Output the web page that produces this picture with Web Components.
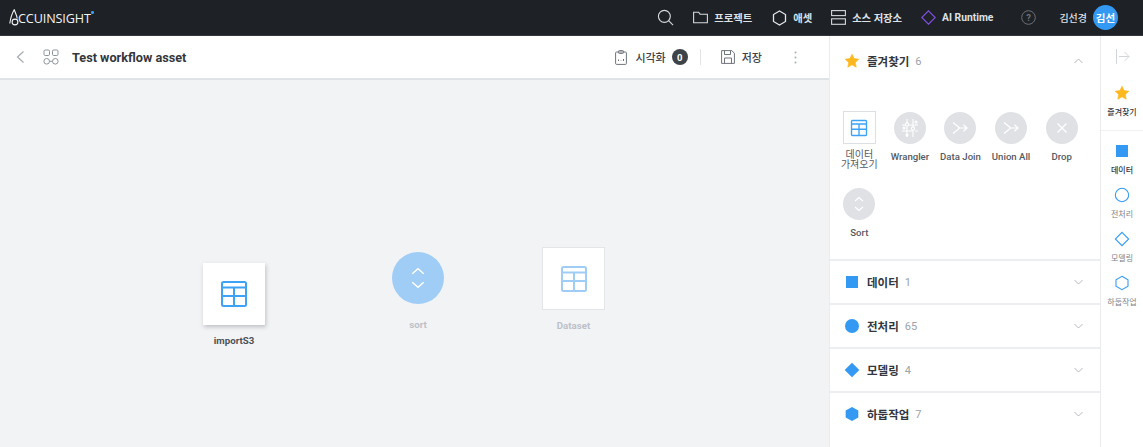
<!DOCTYPE html>
<html lang="ko"><head><meta charset="utf-8"><title>Workflow</title>
<style>
html,body{margin:0;height:100%;overflow:hidden}
body{font-family:Roboto,"Noto Sans CJK KR",sans-serif;color:#33373d}
</style></head><body>
<app-shell></app-shell>
<script>
const ICONS={
 table:(c,w=2)=>`<svg viewBox="0 0 32 32" width="100%" height="100%" fill="none" stroke="${c}" stroke-width="${w}"><rect x="4" y="4" width="24" height="24" rx="1.500"/><path d="M4 9.500H28M4 18H28M16 9.500V28"/></svg>`,
 star:`<svg viewBox="0 0 24 24" width="100%" height="100%"><path fill="#fdb81e" stroke="#fdb81e" stroke-width="1" stroke-linejoin="round" d="M12 1.800l3 6.600 7.200.9-5.300 4.900 1.400 7.100-6.300-3.600-6.300 3.600 1.400-7.100-5.300-4.900 7.200-.9z"/></svg>`,
 square:`<svg viewBox="0 0 24 24" width="100%" height="100%"><rect x="3" y="3" width="18" height="18" fill="#3399f3"/></svg>`,
 circle:`<svg viewBox="0 0 24 24" width="100%" height="100%"><circle cx="12" cy="12" r="10.500" fill="#3399f3"/></svg>`,
 diamond:`<svg viewBox="0 0 24 24" width="100%" height="100%"><path d="M12 1L23 12 12 23 1 12z" fill="#3399f3"/></svg>`,
 hex:`<svg viewBox="0 0 24 24" width="100%" height="100%"><path d="M12 1.500l9.500 5.300v10.400L12 22.500l-9.500-5.300V6.800z" fill="#3399f3"/></svg>`,
 circleO:`<svg viewBox="0 0 24 24" width="100%" height="100%"><circle cx="12" cy="12" r="10" fill="none" stroke="#3399f3" stroke-width="1.600"/></svg>`,
 diamondO:`<svg viewBox="0 0 24 24" width="100%" height="100%"><path d="M12 2L22 12 12 22 2 12z" fill="none" stroke="#3399f3" stroke-width="1.600"/></svg>`,
 hexO:`<svg viewBox="0 0 24 24" width="100%" height="100%"><path d="M12 2l9 5.100v9.800L12 22l-9-5.100V7.100z" fill="none" stroke="#3399f3" stroke-width="1.600"/></svg>`,
 sort:(c,w=1.200)=>`<svg viewBox="0 0 32 32" width="100%" height="100%" fill="none" stroke="${c}" stroke-width="${w}"><path d="M12 13L16 9.500l4 3.500M12 19l4 3.500 4-3.500"/></svg>`,
 join:`<svg viewBox="0 0 32 32" width="100%" height="100%" fill="none" stroke="#fff" stroke-width="1.200"><path d="M9 10.500l6.700 5.500L9 21.500M15.700 16H23M19.500 12.800L23 16l-3.500 3.200"/></svg>`,
 x:`<svg viewBox="0 0 32 32" width="100%" height="100%" fill="none" stroke="#fff" stroke-width="1.200"><path d="M11.500 11.500l9 9M20.500 11.500l-9 9"/></svg>`,
 wrangler:`<svg viewBox="0 0 32 32" width="100%" height="100%" fill="none" stroke="#fff" stroke-width="1.100"><path d="M13 7V11M13 14V25M19 7V15M19 18V25M8 13H12M15 13H24M8 19H18M21 19H24"/><circle cx="13" cy="12.500" r="1.600"/><circle cx="19" cy="16.500" r="1.600"/><circle cx="10" cy="16" r="1"/><circle cx="13" cy="23" r="1"/><circle cx="22" cy="10" r="1"/></svg>`
};

class AppShell extends HTMLElement{constructor(){super();this.attachShadow({mode:'open'}).innerHTML=`<style>
:host{display:grid;grid-template-rows:35px 412px;grid-template-columns:829px 1fr 43px;width:1143px;height:447px}
top-bar{grid-column:1/4}
.left{display:flex;flex-direction:column;min-width:0}
</style>
<top-bar></top-bar>
<div class="left"><work-toolbar></work-toolbar><flow-canvas></flow-canvas></div>
<side-panel></side-panel><side-rail></side-rail>`}}

class TopBar extends HTMLElement{constructor(){super();this.attachShadow({mode:'open'}).innerHTML=`<style>
:host{display:flex;align-items:center;background:#1e2126;color:#e9ebee;height:35px;border-bottom:1px solid #33373d;margin-bottom:-1px;position:relative;z-index:1}
.logo{display:flex;align-items:center;margin-left:9px;font:400 12.600px "Open Sans",sans-serif;letter-spacing:-.1px;color:#f2f3f4;padding-top:1px;position:relative}
.logo svg{width:13px;height:18px;margin-right:-4px}
.logo i{width:2.500px;height:2.500px;border-radius:50%;background:#3aa0f0;position:absolute;right:-3px;top:3px}
nav{margin-left:auto;display:flex;align-items:center;height:100%}
.it{display:flex;align-items:center;font-size:10.300px;font-weight:700;white-space:nowrap;color:#dfe2e6}
.it svg{display:block}
.av{width:25px;height:25px;border-radius:50%;background:#3399f3;color:#fff;font-size:10.500px;font-weight:700;display:flex;align-items:center;justify-content:center;margin:0 25px 0 6px}
</style>
<div class="logo"><svg viewBox="0 0 13 18" fill="none" stroke="#f2f3f4" stroke-width="1.100"><path d="M.8 14.500C1.500 9.500 3 4.500 5.200.8 6.500 4 8 7 8.200 9.500"/><circle cx="6" cy="13" r="2.900"/></svg><span>CCUINSIGHT</span><i></i></div>
<nav>
<div class="it" style="margin-right:19px"><svg width="17" height="17" viewBox="0 0 18 18" fill="none" stroke="#d5d8dc" stroke-width="1.200"><circle cx="7.800" cy="7.800" r="6.300"/><path d="M12.300 12.300L17 17"/></svg></div>
<div class="it" style="margin-right:20px"><svg width="15" height="13" viewBox="0 0 15 13" fill="none" stroke="#d5d8dc" stroke-width="1.100" style="margin-right:6px"><path d="M.6 11.800V1.200h5l1.500 2h7.300v8.600z"/></svg>프로젝트</div>
<div class="it" style="margin-right:19px"><svg width="15" height="16" viewBox="0 0 15 16" fill="none" stroke="#e4e6e9" stroke-width="1.300" style="margin-right:6px"><path d="M7.500 1l6 3.500v7l-6 3.500-6-3.500v-7z"/></svg>애셋</div>
<div class="it" style="margin-right:19px"><svg width="15" height="15" viewBox="0 0 15 15" fill="none" stroke="#d5d8dc" stroke-width="1.100" style="margin-right:6px"><rect x=".6" y=".6" width="13.800" height="5"/><rect x=".6" y="8.800" width="13.800" height="5.500"/></svg>소스 저장소</div>
<div class="it" style="margin-right:28px"><svg width="15" height="15" viewBox="0 0 15 15" fill="none" stroke="#7e4fe0" stroke-width="1.200" style="margin-right:6px"><path d="M7.500 .8l6.700 6.700-6.700 6.700L.8 7.500z"/></svg>AI Runtime</div>
<div class="it" style="margin-right:23px"><svg width="15" height="15" viewBox="0 0 15 15" fill="none" stroke="#6d7177" stroke-width="1"><circle cx="7.500" cy="7.500" r="6.800"/><text x="7.500" y="11" text-anchor="middle" font-size="9.500" font-family="Roboto" fill="#6d7177" stroke="none">?</text></svg></div>
<div class="it" style="font-weight:500;font-size:10px">김선경</div>
<div class="av">김선</div>
</nav>`}}

class WorkToolbar extends HTMLElement{constructor(){super();this.attachShadow({mode:'open'}).innerHTML=`<style>
:host{display:flex;align-items:center;height:44px;box-sizing:border-box;background:#fff;border-bottom:2px solid #dfe2e7;flex:none;margin-top:1px}
h1{font-size:12.700px;font-weight:700;color:#33373d;margin:0 0 0 13px}
.r{margin-left:auto;display:flex;align-items:center;font-size:11px;font-weight:500;color:#3e4249}
.b{width:16px;height:16px;border-radius:50%;background:#3e4249;color:#fff;font-size:9.500px;font-weight:700;display:flex;align-items:center;justify-content:center;margin-left:6px}
.sep{width:1px;height:16px;background:#e2e4e8;margin:0 20px 0 12px}
</style>
<svg width="10" height="14" viewBox="0 0 10 14" fill="none" stroke="#a5abb3" stroke-width="1.200" style="margin-left:15px"><path d="M8.500 1.500L2.500 7l6 5.500"/></svg>
<svg width="16" height="16" viewBox="0 0 16 16" fill="none" stroke="#8d939b" stroke-width="1" style="margin-left:18px"><rect x="1" y="1" width="5.500" height="5.500" rx="1.200"/><rect x="9.500" y="1" width="5.500" height="5.500" rx="1.200"/><circle cx="3.700" cy="12.300" r="2.800"/><circle cx="12.300" cy="12.300" r="2.800"/><path d="M6.500 12.300H9.500"/></svg>
<h1>Test workflow asset</h1>
<div class="r">
<svg width="12" height="15" viewBox="0 0 12 15" fill="none" stroke="#6f747b" stroke-width="1" style="margin-right:8px"><rect x=".6" y="2" width="10.800" height="12.400" rx="1"/><rect x="3.500" y=".6" width="5" height="2.800" rx=".8"/><path d="M3.500 11V9.500M6 11V10.500M8.500 11V9"/></svg>시각화
<span class="b">0</span><span class="sep"></span>
<svg width="14" height="14" viewBox="0 0 14 14" fill="none" stroke="#6f747b" stroke-width="1" style="margin-right:7px"><path d="M.6.6H10.800L13.400 3.200V13.400H.6z"/><path d="M3.500.6V4.500H9.500V.6M3.500 13.400V8H10.500V13.400"/></svg>저장
<svg width="3" height="13" viewBox="0 0 3 13" fill="#a8adb4" style="margin:0 32px 0 32px"><circle cx="1.500" cy="1.500" r="1"/><circle cx="1.500" cy="6.500" r="1"/><circle cx="1.500" cy="11.500" r="1"/></svg>
</div>`}}

class FlowCanvas extends HTMLElement{constructor(){super();this.attachShadow({mode:'open'}).innerHTML=`<style>
:host{display:block;position:relative;flex:1;background:#f2f3f5}
flow-node{position:absolute}
</style>
<flow-node kind="box" label="importS3" style="left:203px;top:183px"></flow-node>
<flow-node kind="circle" label="sort" faded style="left:392px;top:172px"></flow-node>
<flow-node kind="box" label="Dataset" faded style="left:542px;top:167px"></flow-node>`}}

class FlowNode extends HTMLElement{connectedCallback(){
 const k=this.getAttribute('kind'),f=this.hasAttribute('faded'),l=this.getAttribute('label');
 const box=k==='box';
 this.attachShadow({mode:'open'}).innerHTML=`<style>
:host{display:flex;flex-direction:column;align-items:center;width:${box?(f?63:62):52}px}
.n{box-sizing:border-box;display:flex;align-items:center;justify-content:center;flex:none}
.box{width:${f?63:62}px;height:${f?63:62}px;background:#fff;${f?'border:1px solid #e3e5e9':'box-shadow:1px 2px 4px rgba(60,65,75,.28)'}}
.box span{width:32px;height:32px;display:block}
.c{width:52px;height:52px;border-radius:50%;background:#a0cdf5}
.c span{width:46px;height:46px;display:block}
label{font-size:9.700px;font-weight:700;white-space:nowrap;line-height:12px;margin-top:${box?10:15}px;color:${f?'#bcc1c8':'#4c5057'}}
</style>
<div class="n ${box?'box':'c'}"><span>${box?ICONS.table(f?'#a0cdf5':'#3ea2f5',2):ICONS.sort('#fff',1)}</span></div>
<label>${l}</label>`;
}}

class SidePanel extends HTMLElement{constructor(){super();this.attachShadow({mode:'open'}).innerHTML=`<style>
:host{display:block;background:#fff;border-left:1px solid #e9ebee;margin-top:1px;overflow:hidden}
.grid{display:grid;grid-template-columns:repeat(5,50.600px);grid-auto-rows:76px;padding:26px 0 0 4px;height:139px;margin-bottom:8px;box-sizing:content-box}
</style>
<panel-section icon="star" name="즐겨찾기" count="6" open>
<div class="grid">
<fav-item kind="table" label="데이터<br>가져오기"></fav-item>
<fav-item kind="wrangler" label="Wrangler"></fav-item>
<fav-item kind="join" label="Data Join"></fav-item>
<fav-item kind="join" label="Union All"></fav-item>
<fav-item kind="x" label="Drop"></fav-item>
<fav-item kind="sort" label="Sort"></fav-item>
</div></panel-section>
<panel-section icon="square" name="데이터" count="1"></panel-section>
<panel-section icon="circle" name="전처리" count="65"></panel-section>
<panel-section icon="diamond" name="모델링" count="4"></panel-section>
<panel-section icon="hex" name="하둡작업" count="7" last></panel-section>`}}

class PanelSection extends HTMLElement{connectedCallback(){
 const o=this.hasAttribute('open');
 this.attachShadow({mode:'open'}).innerHTML=`<style>
:host{display:block;border-bottom:${this.hasAttribute('last')?'0':'2px solid #eceef1'}}
.h{display:flex;align-items:center;height:${o?50:42}px;padding-left:14px;box-sizing:border-box}
.i{width:16px;height:16px;flex:none}
b{font-size:11.500px;font-weight:700;color:#33373d;margin-left:7px}
em{font-style:normal;font-size:11px;color:#9ca2aa;margin-left:6px}
svg.ch{margin-left:auto;margin-right:17px}
</style>
<div class="h"><span class="i">${ICONS[this.getAttribute('icon')]}</span><b>${this.getAttribute('name')}</b><em>${this.getAttribute('count')}</em>
<svg class="ch" width="9" height="6" viewBox="0 0 9 6" fill="none" stroke="#b4b9c0" stroke-width="1"><path d="${o?'M.5 5L4.500 1l4 4':'M.5 1l4 4 4-4'}"/></svg></div><slot></slot>`;
}}

class FavItem extends HTMLElement{connectedCallback(){
 const k=this.getAttribute('kind'),t=k==='table';
 const inner=t?ICONS.table('#3ea2f5',2.200):k==='sort'?ICONS.sort('#fff'):ICONS[k];
 this.attachShadow({mode:'open'}).innerHTML=`<style>
:host{display:flex;flex-direction:column;align-items:center}
.c{width:32px;height:32px;display:flex;align-items:center;justify-content:center;box-sizing:border-box;${t?'border:1px solid #dcdfe4;background:#fff;width:33px;height:33px;margin-top:-1px':'border-radius:50%;background:#dfe1e5'}}
.c span{display:block;width:${t?'20px':'32px'};height:${t?'20px':'32px'}}
p{margin:${t?6:8}px 0 0;font-size:${t?10:9.600}px;font-weight:${t?400:500};line-height:10px;text-align:center;color:#565a61;white-space:nowrap}
</style><div class="c"><span>${inner}</span></div><p>${this.getAttribute('label')}</p>`;
}}

class SideRail extends HTMLElement{constructor(){super();this.attachShadow({mode:'open'}).innerHTML=`<style>
:host{display:flex;flex-direction:column;align-items:center;background:#fff;border-left:1px solid #e9ebee;box-sizing:border-box;margin-top:1px}
.top{width:100%;height:94px;border-bottom:1px solid #eef0f2;display:flex;flex-direction:column;align-items:center;flex:none}
.arrow{margin-top:13px;margin-bottom:21px}
</style>
<div class="top"><svg class="arrow" width="15" height="15" viewBox="0 0 15 15" fill="none" stroke="#d2d6db" stroke-width="1"><path d="M1.500 0V15M4 7.500H14M9.500 3l4.500 4.500L9.500 12"/></svg>
<rail-item icon="star" label="즐겨찾기" active></rail-item></div>
<rail-item icon="square" label="데이터" active style="margin-top:12px"></rail-item>
<rail-item icon="circleO" label="전처리"></rail-item>
<rail-item icon="diamondO" label="모델링"></rail-item>
<rail-item icon="hexO" label="하둡작업"></rail-item>`}}

class RailItem extends HTMLElement{connectedCallback(){
 const a=this.hasAttribute('active');
 this.attachShadow({mode:'open'}).innerHTML=`<style>
:host{display:flex;flex-direction:column;align-items:center;height:44px}
.i{width:16px;height:16px;display:block}
span.l{font-size:8px;line-height:10px;margin-top:7px;white-space:nowrap;color:${a?'#33373d':'#7c8188'};font-weight:${a?500:400}}
</style><span class="i">${ICONS[this.getAttribute('icon')]}</span><span class="l">${this.getAttribute('label')}</span>`;
}}

[['app-shell',AppShell],['top-bar',TopBar],['work-toolbar',WorkToolbar],['flow-canvas',FlowCanvas],['flow-node',FlowNode],['side-panel',SidePanel],['panel-section',PanelSection],['fav-item',FavItem],['side-rail',SideRail],['rail-item',RailItem]].forEach(([n,c])=>customElements.define(n,c));
</script></body></html>
